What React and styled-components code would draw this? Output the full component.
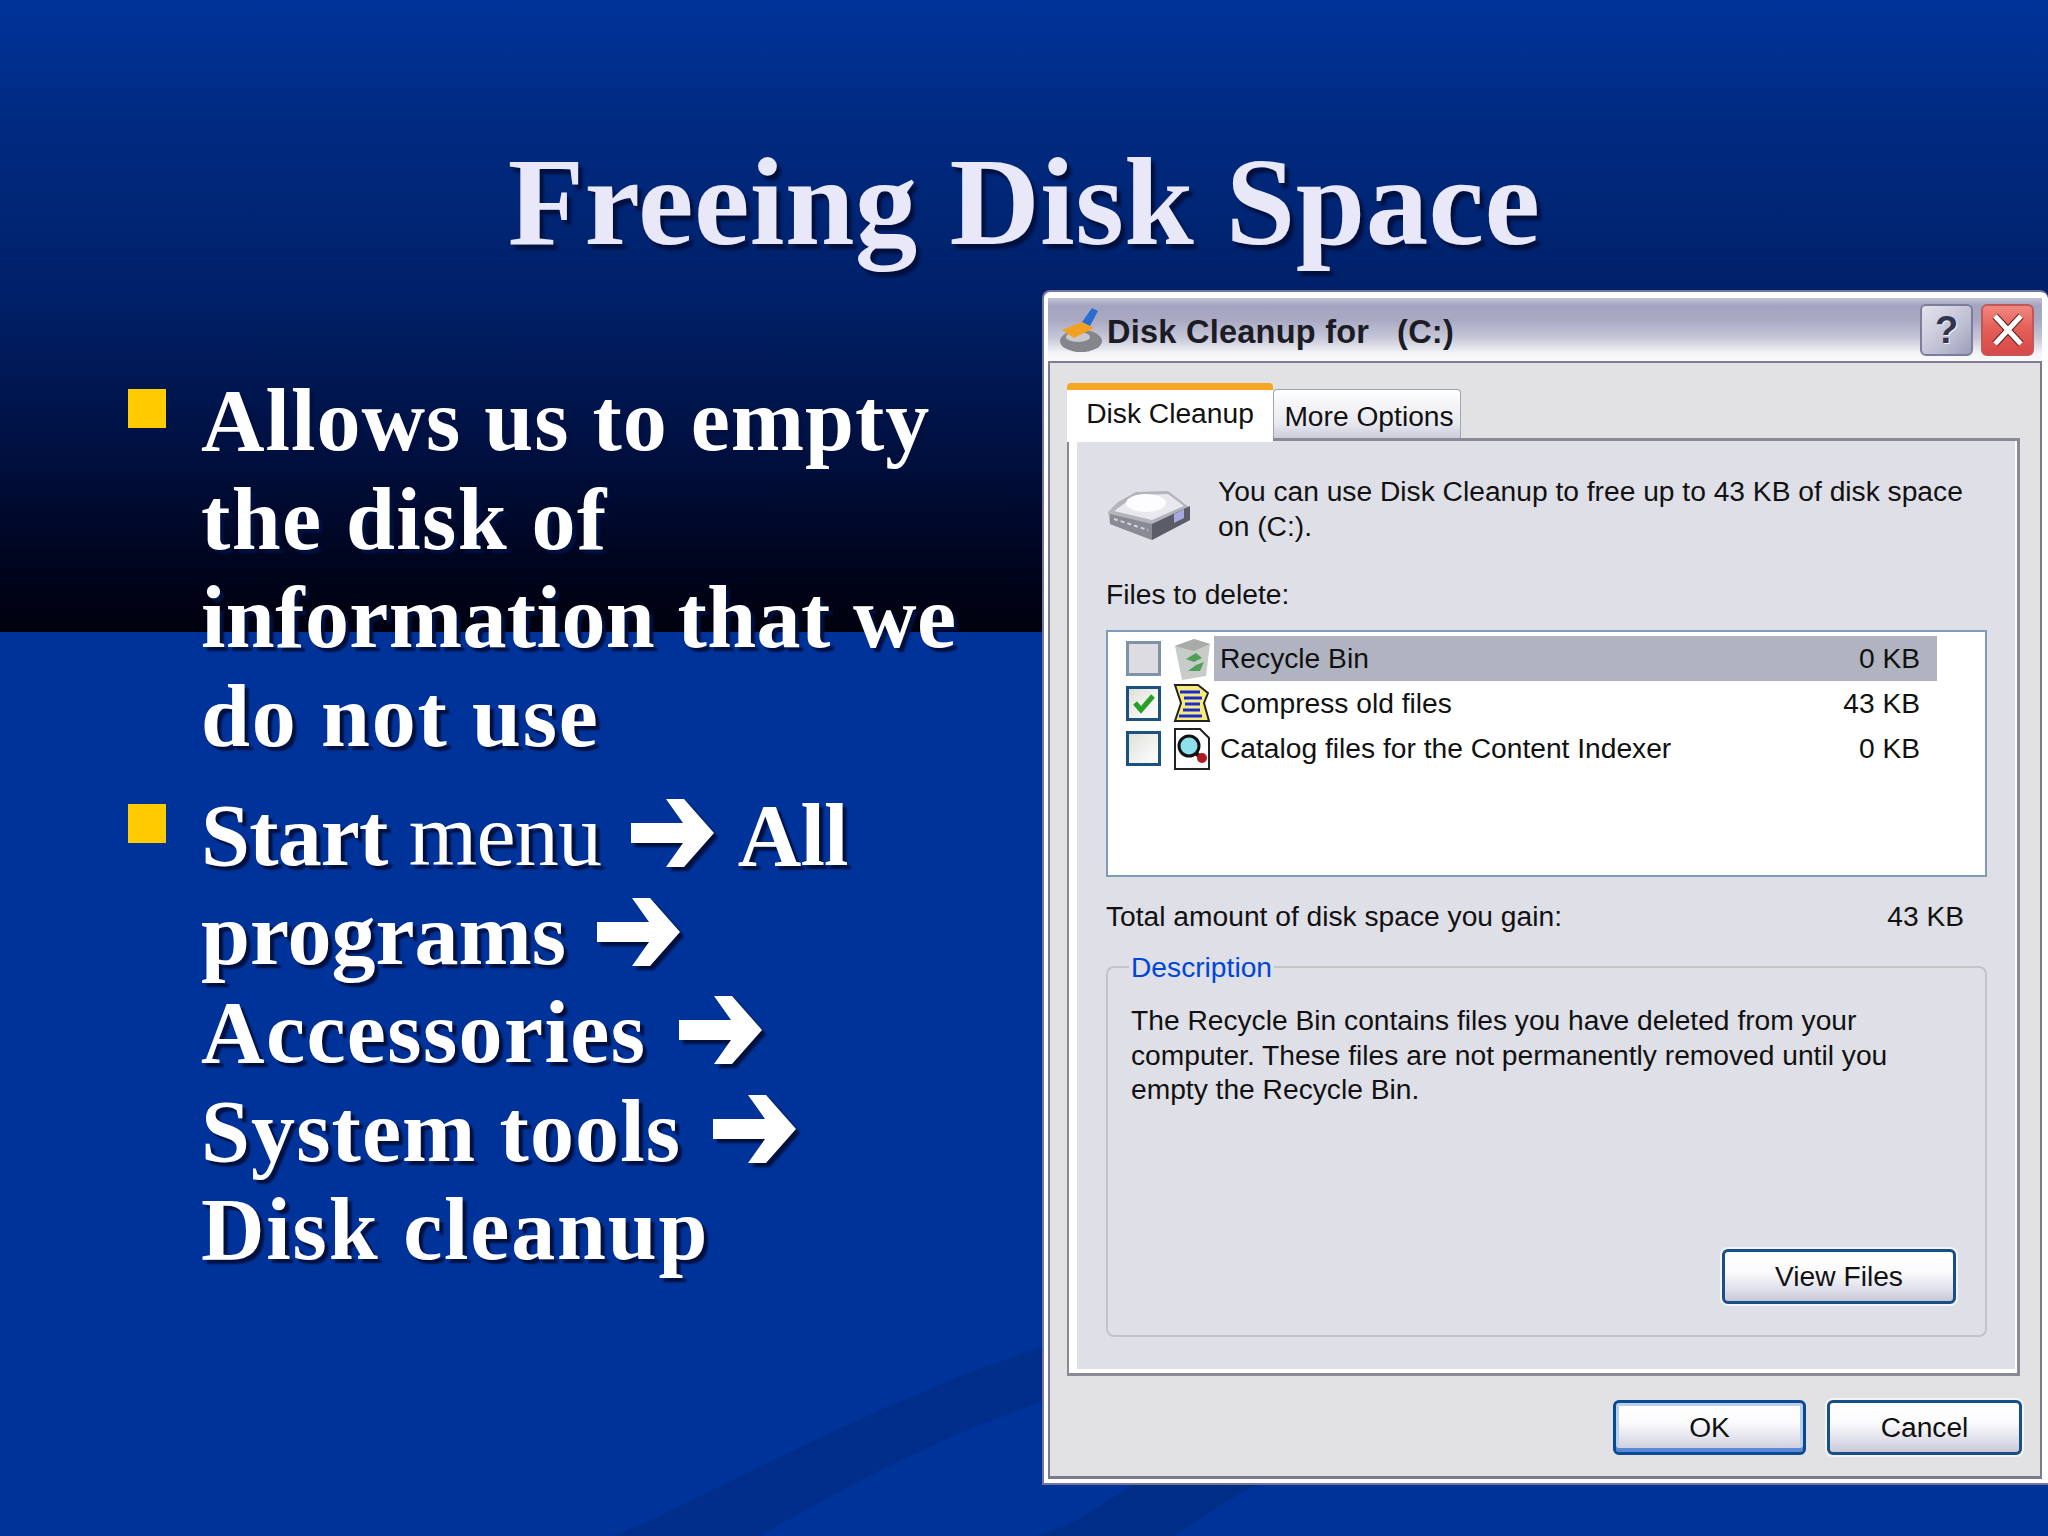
import React from "react";
import styled, { createGlobalStyle } from "styled-components";

const Global = createGlobalStyle`
  html, body { margin: 0; padding: 0; background: #003399; }
  #root { width: 2048px; height: 1536px; overflow: hidden; }
`;

const Slide = styled.div`
  position: relative;
  width: 2048px;
  height: 1536px;
  overflow: hidden;
  display: flex;
  flex-direction: column;
  background: linear-gradient(180deg, #003399 0, #002a80 130px, #002068 300px, #001040 450px, #00041c 570px, #00020e 632px, #003399 632px);
`;

const Swoosh = styled.svg`
  position: absolute;
  left: 0;
  top: 0;
  width: 2048px;
  height: 1536px;
`;

const Title = styled.h1`
  position: relative;
  margin: 0;
  height: 290px;
  box-sizing: border-box;
  padding-top: 132px;
  text-align: center;
  font: bold 125px/140px "Liberation Serif", serif;
  letter-spacing: 0.4px;
  color: #e8e8f8;
  text-shadow: 4px 5px 3px #00103f;
`;

const Content = styled.div`
  position: relative;
  flex: 1;
  display: flex;
  min-height: 0;
`;

const BulletList = styled.ul`
  list-style: none;
  margin: 0;
  padding: 82px 0 0 128px;
  width: 1042px;
  box-sizing: border-box;
  display: flex;
  flex-direction: column;
  gap: 21px;
`;

const Bullet = styled.li`
  display: flex;
  gap: 35px;
  font: bold 88px/98.5px "Liberation Serif", serif;
  color: #fff;
  text-shadow: 4px 4px 2px #00103f;
`;

const Square = styled.span`
  flex: none;
  width: 38px;
  height: 39px;
  margin-top: 17px;
  background: #ffcc00;
`;

const Line = styled.span`
  display: block;
  white-space: nowrap;
  letter-spacing: ${(p) => p.$ls}px;
`;

const Light = styled.span`
  font-weight: normal;
`;

const ArrowIcon = styled.svg`
  display: inline-block;
  width: 84px;
  height: 72px;
  vertical-align: -4px;
  margin: 0 6px 0 9px;
  filter: drop-shadow(4px 4px 1px #00103f);
`;

const Arrow = () => (
  <ArrowIcon viewBox="0 0 84 72">
    <path fill="#fff" d="M0 26H52L35 2H53L83 36L53 70H35L52 46H0Z" />
  </ArrowIcon>
);

const Dialog = styled.section`
  width: 1006px;
  height: 1195px;
  flex: none;
  box-sizing: border-box;
  display: flex;
  flex-direction: column;
  background: #fff;
  border: solid #74749a;
  border-width: 2px 0 2px 2px;
  border-radius: 8px 8px 0 0;
  padding: 6px 6px 4px 4px;
  font: 28.2px/35px "Liberation Sans", Arial, sans-serif;
  color: #111;
`;

const TitleBar = styled.header`
  height: 65px;
  flex: none;
  box-sizing: border-box;
  display: flex;
  align-items: center;
  padding: 0 8px 0 8px;
  background: linear-gradient(180deg, #c3c3d6 0, #a4a4c0 12%, #a9a9c3 35%, #c9c9da 65%, #f4f4f8 88%, #fafafc 100%);
  border-bottom: 2px solid #7c7c94;
`;

const TitleText = styled.span`
  flex: 1;
  margin-left: 1px;
  font: bold 32.5px/40px "Liberation Sans", Arial, sans-serif;
  letter-spacing: 0.25px;
  white-space: pre;
  color: #1c1c24;
  transform: translateY(2px);
`;

const CaptionButton = styled.span`
  width: 53px;
  height: 52px;
  margin-left: 8px;
  box-sizing: border-box;
  display: flex;
  align-items: center;
  justify-content: center;
  border-radius: 6px;
  border: 2px solid ${(p) => (p.$danger ? "#c05858" : "#7c7c9c")};
  background: ${(p) =>
    p.$danger
      ? "linear-gradient(180deg, #f08880, #e46058 45%, #d84848)"
      : "linear-gradient(135deg, #e4e4ee, #c0c0d4 60%, #9c9cb8)"};
  color: #34344c;
  font: bold 38px/40px "Liberation Sans", Arial, sans-serif;
  text-shadow: 1px 1px 0 #f0f0f8;
`;

const Client = styled.div`
  flex: 1;
  min-height: 0;
  display: flex;
  flex-direction: column;
  background: #e2e2e5;
  border: solid #7a7a8c;
  border-width: 0 2px 3px 2px;
  padding: 18px 18px 0 17px;
`;

const Tabs = styled.div`
  display: flex;
  align-items: flex-end;
  height: 57px;
  flex: none;
`;

const Tab = styled.div`
  box-sizing: border-box;
  display: flex;
  justify-content: center;
  align-items: center;
  ${(p) =>
    p.$active
      ? `
    width: 206px;
    height: 59px;
    margin-bottom: -4px;
    position: relative;
    padding-bottom: 6px;
    background: #fff;
    border-top: 7px solid #f5a623;
    border-radius: 4px 4px 0 0;
  `
      : `
    width: 188px;
    height: 49px;
    padding: 4px 0 0 4px;
    background: linear-gradient(180deg, #fff, #e8e8f0 70%, #ccccdc);
    border: 1px solid #9aa8b0;
    border-bottom: none;
    border-radius: 4px 4px 0 0;
  `}
`;

const Panel = styled.div`
  flex: none;
  height: 938px;
  box-sizing: border-box;
  width: 953px;
  background: #dfdfe7;
  border: solid #8a8a96;
  border-width: 3px 3px 3px 2px;
  box-shadow: inset 8px 0 0 #fff, inset 0 -4px 0 #fff, inset -2px 0 0 #fff;
  padding: 33px 32px 0 37px;
  display: flex;
  flex-direction: column;
`;

const Intro = styled.div`
  display: flex;
  height: 88px;
  flex: none;
`;

const DriveIcon = styled.svg`
  flex: none;
  width: 88px;
  height: 54px;
  margin: 14px 24px 0 0;
`;

const IntroText = styled.p`
  margin: 0;
  width: 770px;
`;

const Label = styled.div`
  margin-top: 15px;
  height: 37px;
`;

const ListBox = styled.div`
  height: 247px;
  margin-top: 16px;
  width: 881px;
  flex: none;
  box-sizing: border-box;
  background: #fff;
  border: 2px solid #7f9db9;
  padding: 4px 0 0 18px;
  display: flex;
  flex-direction: column;
`;

const Row = styled.div`
  height: 45px;
  flex: none;
  display: flex;
  align-items: center;
`;

const Check = styled.span`
  width: 35px;
  height: 35px;
  flex: none;
  box-sizing: border-box;
  border: 3px solid ${(p) => (p.$muted ? "#7e92a8" : "#1c5180")};
  background: ${(p) => (p.$muted ? "#dcdce2" : "linear-gradient(135deg, #e0e0da, #fff)")};
  display: flex;
  align-items: center;
  justify-content: center;
`;

const FileIcon = styled.svg`
  width: 40px;
  height: 42px;
  flex: none;
  margin: 0 0 0 11px;
`;

const RowBody = styled.div`
  flex: none;
  width: 723px;
  height: 45px;
  margin-left: 2px;
  padding: 0 17px 0 6px;
  box-sizing: border-box;
  display: flex;
  justify-content: space-between;
  align-items: center;
  background: ${(p) => (p.$selected ? "#b0b4c0" : "transparent")};
`;

const TotalRow = styled.div`
  display: flex;
  justify-content: space-between;
  width: 858px;
  margin-top: 22px;
  height: 35px;
  flex: none;
`;

const Group = styled.fieldset`
  margin: 18px 0 0;
  width: 881px;
  height: 385px;
  flex: none;
  box-sizing: border-box;
  border: 2px solid #c4c4c8;
  border-radius: 8px;
  padding: 6px 29px 0 23px;
`;

const GroupBody = styled.div`
  height: 316px;
  display: flex;
  flex-direction: column;
`;

const Legend = styled.legend`
  padding: 0 2px;
  margin-left: -2px;
  color: #0046d5;
  line-height: 30px;
`;

const GroupText = styled.p`
  margin: 15px 0 0;
  width: 800px;
  line-height: 34.5px;
`;

const Button = styled.button`
  width: ${(p) => p.$w}px;
  height: 55px;
  padding: 0;
  box-sizing: border-box;
  font: inherit;
  color: #111;
  border: 3px solid ${(p) => (p.$default ? "#0a4a90" : "#184f84")};
  border-radius: 6px;
  background: linear-gradient(180deg, #fff 0, #fbfbfd 40%, #dcdce8 80%, #c8c8d8 100%);
  box-shadow: ${(p) => (p.$default ? "inset 0 3px 0 #b8d0ee, inset 0 -4px 0 #5a88d8, inset 3px 0 0 #b8d0ee, inset -3px 0 0 #b8d0ee" : "0 0 0 2px #f4f4f6")};
`;

const ViewRow = styled.div`
  display: flex;
  justify-content: flex-end;
  margin-top: auto;
`;

const Footer = styled.div`
  display: flex;
  justify-content: flex-end;
  gap: 21px;
  margin-top: 24px;
`;

const Swooshes = () => (
  <Swoosh viewBox="0 0 2048 1536">
    <path fill="#002e8a" d="M615 1536C740 1480 880 1400 1042 1347V1402C930 1440 840 1490 760 1536Z" />
    <path fill="#002d86" d="M1033 1536C1070 1530 1100 1505 1133 1485H1257C1225 1500 1200 1520 1173 1536Z" />
  </Swoosh>
);

const Drive = () => (
  <DriveIcon viewBox="0 0 88 54">
    <path fill="#b4b4bc" d="M2 24L12 14L30 4L62 3L84 20L84 32L46 52L30 46L4 36Z" />
    <path fill="#e8e8ee" d="M8 23L30 7L62 6L78 18L46 32Z" />
    <ellipse cx="40" cy="15" rx="20" ry="9" fill="#fdfdff" />
    <path fill="#8a8a94" d="M4 26L46 36V52L4 36Z" />
    <path fill="#5c5c68" d="M46 36L84 18V32L46 52Z" />
    <path fill="#a8a8e0" d="M68 26L78 21V30L68 35Z" />
    <path stroke="#d4d4dc" strokeWidth="2" strokeDasharray="4 3" d="M8 31L42 42" />
  </DriveIcon>
);

const App = () => (
  <>
    <Global />
    <Slide>
      <Swooshes />
      <Title>Freeing Disk Space</Title>
      <Content>
        <BulletList>
          <Bullet>
            <Square />
            <div>
              <Line $ls={1}>Allows us to empty</Line>
              <Line $ls={1.4}>the disk of</Line>
              <Line $ls={0.4}>information that we</Line>
              <Line $ls={1.7}>do not use</Line>
            </div>
          </Bullet>
          <Bullet>
            <Square />
            <div>
              <Line $ls={-0.8}>
                Start <Light>menu</Light> <Arrow /> All
              </Line>
              <Line $ls={0}>
                programs <Arrow />
              </Line>
              <Line $ls={1.4}>
                Accessories <Arrow />
              </Line>
              <Line $ls={1.1}>
                System tools <Arrow />
              </Line>
              <Line $ls={1.8}>Disk cleanup</Line>
            </div>
          </Bullet>
        </BulletList>
        <Dialog>
          <TitleBar>
            <svg width="50" height="48" viewBox="0 0 50 48">
              <ellipse cx="25" cy="35" rx="21" ry="11" fill="#85858c" />
              <ellipse cx="22" cy="31" rx="12" ry="5" fill="#c8c8ce" />
              <path fill="#f2a020" d="M6 24L26 16L38 22L18 32Z" />
              <path fill="#2a6cd0" d="M26 16L36 2L42 5L34 20Z" />
            </svg>
            <TitleText>{"Disk Cleanup for   (C:)"}</TitleText>
            <CaptionButton>?</CaptionButton>
            <CaptionButton $danger>
              <svg width="36" height="34" viewBox="0 0 36 34">
                <path stroke="#5a2020" strokeWidth="7" d="M5 3L31 31M31 3L5 31" />
                <path stroke="#fff" strokeWidth="5" d="M5 3L31 31M31 3L5 31" />
              </svg>
            </CaptionButton>
          </TitleBar>
          <Client>
            <Tabs>
              <Tab $active>Disk Cleanup</Tab>
              <Tab>More Options</Tab>
            </Tabs>
            <Panel>
              <Intro>
                <Drive />
                <IntroText>You can use Disk Cleanup to free up to 43 KB of disk space on  (C:).</IntroText>
              </Intro>
              <Label>Files to delete:</Label>
              <ListBox>
                <Row>
                  <Check $muted />
                  <FileIcon viewBox="0 0 40 42">
                    <path fill="#c8ccc8" d="M3 8L22 1L38 6L34 38L10 42Z" />
                    <path fill="#a8aca8" d="M3 8L22 13L38 6L22 1Z" />
                    <path fill="#4f9f58" d="M14 21L24 15L30 20L22 24ZM24 27L32 24L28 33L16 33Z" />
                  </FileIcon>
                  <RowBody $selected>
                    <span>Recycle Bin</span>
                    <span>0 KB</span>
                  </RowBody>
                </Row>
                <Row>
                  <Check>
                    <svg width="22" height="20" viewBox="0 0 22 20">
                      <path fill="none" stroke="#28a028" strokeWidth="5" d="M2 9L8 16L20 2" />
                    </svg>
                  </Check>
                  <FileIcon viewBox="0 0 40 42">
                    <path fill="#f8ec78" stroke="#222" strokeWidth="2" d="M3 2H26L36 10L32 20L37 38H3L9 20Z" />
                    <path stroke="#1a28d8" strokeWidth="3" d="M8 9H28M12 15H30M13 21H28M11 27H28M7 33H30" />
                  </FileIcon>
                  <RowBody>
                    <span>Compress old files</span>
                    <span>43 KB</span>
                  </RowBody>
                </Row>
                <Row>
                  <Check />
                  <FileIcon viewBox="0 0 40 42">
                    <path fill="#fff" stroke="#222" strokeWidth="2" d="M3 1H28L37 10V41H3Z" />
                    <circle cx="17" cy="18" r="10" fill="#8fe0ee" stroke="#111" strokeWidth="3" />
                    <path stroke="#111" strokeWidth="4" d="M24 25L30 31" />
                    <circle cx="30" cy="30" r="5" fill="#b01820" />
                  </FileIcon>
                  <RowBody>
                    <span>Catalog files for the Content Indexer</span>
                    <span>0 KB</span>
                  </RowBody>
                </Row>
              </ListBox>
              <TotalRow>
                <span>Total amount of disk space you gain:</span>
                <span>43 KB</span>
              </TotalRow>
              <Group>
                <Legend>Description</Legend>
                <GroupBody>
                  <GroupText>
                    The Recycle Bin contains files you have deleted from your computer. These files are not permanently removed until you empty the Recycle Bin.
                  </GroupText>
                  <ViewRow>
                    <Button $w={234}>View Files</Button>
                  </ViewRow>
                </GroupBody>
              </Group>
            </Panel>
            <Footer>
              <Button $default $w={193}>OK</Button>
              <Button $w={195}>Cancel</Button>
            </Footer>
          </Client>
        </Dialog>
      </Content>
    </Slide>
  </>
);

export default App;
